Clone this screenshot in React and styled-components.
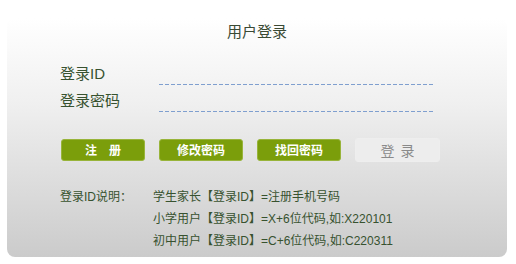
import React from 'react';
import styled, { createGlobalStyle } from 'styled-components';

const GlobalStyle = createGlobalStyle`
  body {
    margin: 0;
    background: #ffffff;
    font-family: 'Liberation Sans', 'Noto Sans CJK SC', sans-serif;
  }
`;

const Panel = styled.div`
  margin: 18px 0 0 7px;
  width: 500px;
  height: 239px;
  box-sizing: border-box;
  padding: 4px 0 0 53px;
  border-radius: 8px;
  background: linear-gradient(to bottom, #ffffff 0%, #f0f0f0 35%, #cbcbcb 100%);
  color: #37522f;
`;

const Title = styled.div`
  margin-left: -53px;
  font-size: 15px;
  line-height: 20px;
  text-align: center;
  color: #3a4a34;
  margin-bottom: 16px;
`;

const FieldRow = styled.div`
  display: flex;
  align-items: flex-end;
  height: 27px;
`;

const FieldLabel = styled.label`
  width: 99px;
  font-size: 15px;
  line-height: 22px;
`;

const FieldInput = styled.input`
  width: 274px;
  height: 27px;
  box-sizing: border-box;
  border: 0;
  padding: 0 4px;
  outline: none;
  background:
    repeating-linear-gradient(to right, #7f9fcf 0 4px, transparent 4px 6px) bottom / 100% 1px no-repeat;
  font-size: 14px;
`;

const ButtonBar = styled.div`
  display: flex;
  align-items: center;
  gap: 14px;
  margin: 26px 0 0 1px;
  height: 24px;
`;

const Button = styled.button`
  width: ${(p) => (p.$muted ? '85px' : '84px')};
  height: ${(p) => (p.$muted ? '24px' : '22px')};
  margin: 0;
  box-sizing: border-box;
  border-radius: 3px;
  border: 1px solid ${(p) => (p.$muted ? '#eeeeee' : '#98b43a')};
  background: ${(p) => (p.$muted ? '#ededed' : '#7b9e0b')};
  color: ${(p) => (p.$muted ? '#8a8a8a' : '#ffffff')};
  font-family: 'Noto Sans CJK SC', sans-serif;
  font-size: ${(p) => (p.$muted ? '14px' : '12px')};
  font-weight: ${(p) => (p.$muted ? 'normal' : 'bold')};
  word-spacing: ${(p) => (p.$muted ? '3px' : '0')};
  padding: 0;
  line-height: 1;
  cursor: pointer;
`;

const Notes = styled.div`
  display: grid;
  grid-template-columns: 93px auto;
  margin-top: 24px;
  font-size: 12px;
  line-height: 22px;
`;

const NoteList = styled.div`
  display: flex;
  flex-direction: column;
`;

const notes = [
  '学生家长【登录ID】=注册手机号码',
  '小学用户【登录ID】=X+6位代码,如:X220101',
  '初中用户【登录ID】=C+6位代码,如:C220311',
];

export default function App() {
  return (
    <>
      <GlobalStyle />
      <Panel>
        <Title>用户登录</Title>
        <FieldRow>
          <FieldLabel>登录ID</FieldLabel>
          <FieldInput type="text" />
        </FieldRow>
        <FieldRow>
          <FieldLabel>登录密码</FieldLabel>
          <FieldInput type="password" />
        </FieldRow>
        <ButtonBar>
          <Button>注　册</Button>
          <Button>修改密码</Button>
          <Button>找回密码</Button>
          <Button $muted>登 录</Button>
        </ButtonBar>
        <Notes>
          <div>登录ID说明：</div>
          <NoteList>
            {notes.map((n) => (
              <div key={n}>{n}</div>
            ))}
          </NoteList>
        </Notes>
      </Panel>
    </>
  );
}
